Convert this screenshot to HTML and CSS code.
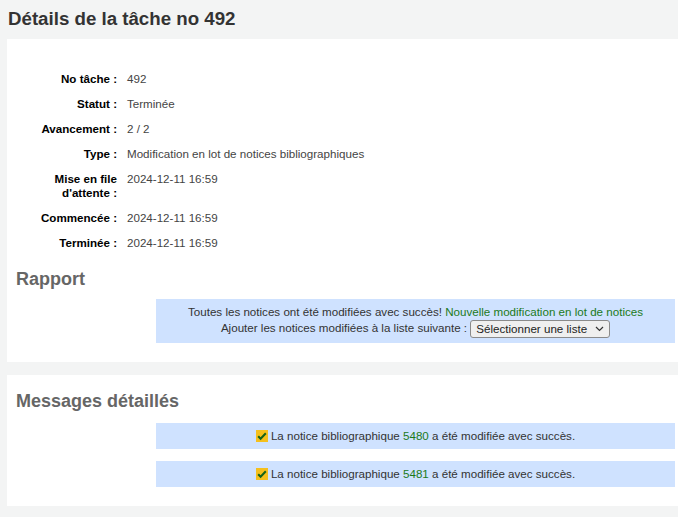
FILE: index.html
```html
<!DOCTYPE html>
<html lang="fr">
<head>
<meta charset="utf-8">
<title>Détails de la tâche no 492</title>
<link rel="stylesheet" href="styles.css">
</head>
<body>
<h1 class="page-title">Détails de la tâche no 492</h1>
<div class="panel panel-details">
  <dl class="rows">
    <dt>No tâche :</dt><dd>492</dd>
    <dt>Statut :</dt><dd>Terminée</dd>
    <dt>Avancement :</dt><dd>2 / 2</dd>
    <dt>Type :</dt><dd>Modification en lot de notices bibliographiques</dd>
    <dt>Mise en file d'attente :</dt><dd>2024-12-11 16:59</dd>
    <dt>Commencée :</dt><dd>2024-12-11 16:59</dd>
    <dt>Terminée :</dt><dd>2024-12-11 16:59</dd>
  </dl>
  <h2 class="section-title">Rapport</h2>
  <div class="alert alert-report">
    <div>Toutes les notices ont été modifiées avec succès! <a href="#" class="link">Nouvelle modification en lot de notices</a></div>
    <div class="add-list">Ajouter les notices modifiées à la liste suivante : <span class="select">Sélectionner une liste <svg class="chev" width="9" height="6" viewBox="0 0 9 6"><path d="M1 1l3.5 3.5L8 1" fill="none" stroke="#333" stroke-width="1.2"/></svg></span></div>
  </div>
</div>
<div class="panel panel-messages">
  <h2 class="section-title">Messages détaillés</h2>
  <div class="alert alert-msg"><span class="check"><svg width="12" height="12" viewBox="0 0 12 12"><rect width="12" height="12" fill="#f5c01d"/><path d="M2.2 6.3l2.4 2.5 5.2-5.6" fill="none" stroke="#14621a" stroke-width="2"/></svg></span>La notice bibliographique <a href="#" class="link">5480</a> a été modifiée avec succès.</div>
  <div class="alert alert-msg"><span class="check"><svg width="12" height="12" viewBox="0 0 12 12"><rect width="12" height="12" fill="#f5c01d"/><path d="M2.2 6.3l2.4 2.5 5.2-5.6" fill="none" stroke="#14621a" stroke-width="2"/></svg></span>La notice bibliographique <a href="#" class="link">5481</a> a été modifiée avec succès.</div>
</div>
</body>
</html>
```
FILE: styles.css
```css
html, body {
  margin: 0;
  padding: 0;
  background: #f3f4f4;
  font-family: "Liberation Sans", Arial, sans-serif;
  color: #333;
}
.page-title {
  margin: 0;
  padding: 8px 8px 0 8px;
  height: 31px;
  font-size: 18.7px;
  font-weight: bold;
  color: #333;
  line-height: 22px;
}
.panel {
  background: #fff;
  margin-left: 7px;
  padding-right: 3px;
}
.panel-details {
  padding-top: 33px;
  padding-bottom: 19px;
}
.panel-messages {
  margin-top: 13px;
  padding-top: 15px;
  padding-bottom: 19px;
  margin-bottom: 11px;
}
.rows {
  margin: 0;
  display: grid;
  grid-template-columns: 110px 1fr;
  column-gap: 10px;
  row-gap: 11px;
  font-size: 11.6px;
  line-height: 14px;
}
.rows dt {
  font-weight: bold;
  color: #000;
  text-align: right;
  padding-left: 30px;
}
.rows dd {
  margin: 0;
  color: #444;
}
.section-title {
  margin: 18px 0 0 9px;
  font-size: 18px;
  line-height: 22px;
  font-weight: bold;
  color: #666;
}
.panel-messages .section-title {
  margin-top: 0;
}
.alert {
  margin-left: 149px;
  background: #cfe2ff;
  text-align: center;
  font-size: 11.6px;
  color: #333;
}
.alert-report {
  margin-top: 9px;
  padding: 5px 0 5px;
  line-height: 16px;
}
.select {
  display: inline-flex;
  align-items: center;
  gap: 8px;
  height: 16px;
  padding: 0 5px;
  border: 1px solid #8a8a8a;
  border-radius: 3px;
  background: #efefef;
  color: #222;
  vertical-align: middle;
  line-height: 16px;
}
.chev {
  display: block;
}
.alert-msg {
  margin-top: 12px;
  height: 26px;
  line-height: 26px;
}
.panel-messages .section-title + .alert-msg {
  margin-top: 11px;
}
.check {
  display: inline-block;
  vertical-align: -2px;
  margin-right: 3px;
}
.check svg {
  display: block;
}
.link {
  color: #1b7a1b;
  text-decoration: none;
}
```
